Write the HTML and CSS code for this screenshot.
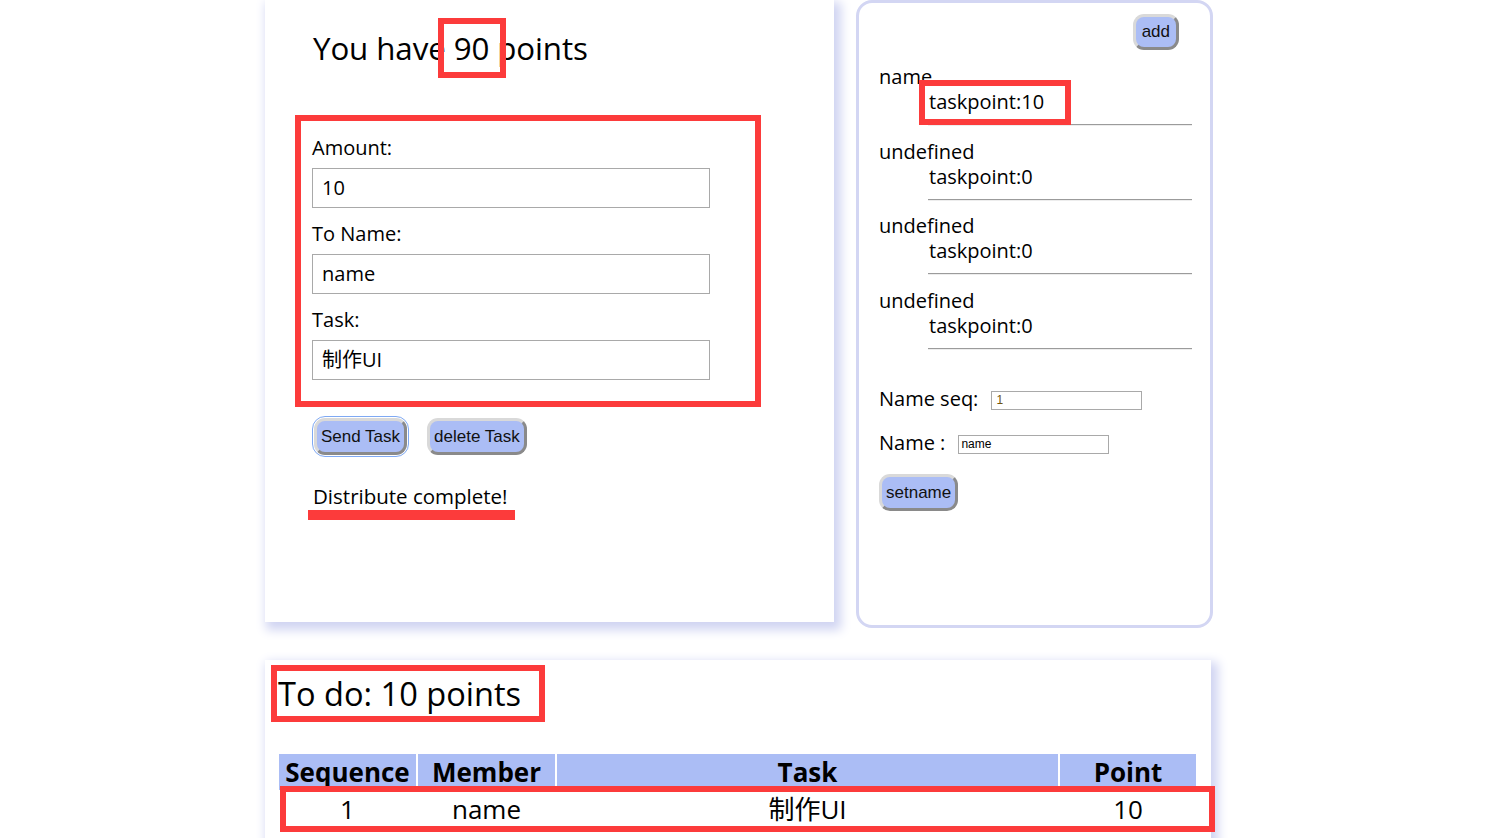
FILE: index.html
```html
<!DOCTYPE html>
<html>
<head>
<meta charset="utf-8">
<link rel="stylesheet" href="styles.css">
</head>
<body>
<div class="page">
  <div class="top-row">
    <div class="card left-card">
      <div class="headline">You have <span class="mark mark-90">90</span> points</div>
      <div class="form-box">
        <div class="label first">Amount:</div>
        <div class="field">10</div>
        <div class="label">To Name:</div>
        <div class="field">name</div>
        <div class="label">Task:</div>
        <div class="field">制作UI</div>
      </div>
      <div class="btn-row">
        <button class="btn focused">Send Task</button>
        <button class="btn">delete Task</button>
      </div>
      <div class="status"><span class="status-text">Distribute complete!</span></div>
    </div>
    <div class="right-card">
      <div class="add-row"><button class="btn btn-add">add</button></div>
      <div class="member">
        <div class="m-name">name</div>
        <div class="m-point"><span class="mark mark-tp">taskpoint:10</span></div>
        <div class="m-rule"></div>
      </div>
      <div class="member">
        <div class="m-name">undefined</div>
        <div class="m-point">taskpoint:0</div>
        <div class="m-rule"></div>
      </div>
      <div class="member">
        <div class="m-name">undefined</div>
        <div class="m-point">taskpoint:0</div>
        <div class="m-rule"></div>
      </div>
      <div class="member">
        <div class="m-name">undefined</div>
        <div class="m-point">taskpoint:0</div>
        <div class="m-rule"></div>
      </div>
      <div class="set-row seq-row"><span>Name seq:</span><span class="small-input seq">1</span></div>
      <div class="set-row name-row"><span>Name :</span><span class="small-input">name</span></div>
      <button class="btn btn-set">setname</button>
    </div>
  </div>
  <div class="card bottom-card">
    <div class="todo"><span class="mark mark-todo">To do: 10 points</span></div>
    <div class="table-wrap">
      <table class="tasks">
        <thead>
          <tr><th class="c-seq">Sequence</th><th class="c-mem">Member</th><th class="c-task">Task</th><th class="c-pt">Point</th></tr>
        </thead>
        <tbody>
          <tr><td>1</td><td>name</td><td>制作UI</td><td>10</td></tr>
        </tbody>
      </table>
      <div class="row-mark"></div>
    </div>
  </div>
</div>
</body>
</html>
```

FILE: styles.css
```css
html, body {
  margin: 0;
  padding: 0;
  background: #ffffff;
}
body {
  font-family: "Open Sans", "Noto Sans CJK SC", sans-serif;
  color: #000;
  width: 1500px;
  height: 838px;
  overflow: hidden;
}
.page {
  padding-left: 265px;
}
.top-row {
  display: flex;
  align-items: flex-start;
  gap: 22px;
}
.card {
  background: #fff;
  box-shadow: 4px 5px 10px 3px #d0d4f2;
}
.left-card {
  width: 569px;
  height: 622px;
  box-sizing: border-box;
  padding-top: 26px;
}
.headline {
  font-size: 31.3px;
  line-height: 44px;
  margin-left: 48px;
  letter-spacing: -0.1px;
}
.mark {
  position: relative;
}
.mark::after {
  content: "";
  position: absolute;
  border: 6px solid #fc3b3b;
}
.mark-90::after {
  left: -16px;
  right: -17px;
  top: -9px;
  bottom: -9px;
}
.form-box {
  margin: 45px 0 0 30px;
  width: 466px;
  height: 292px;
  box-sizing: border-box;
  border: 6px solid #fc3b3b;
  padding: 14px 0 0 11px;
}
.label {
  font-size: 20px;
  line-height: 26px;
  margin-top: 13px;
}
.label.first {
  margin-top: 0;
}
.field {
  margin-top: 7px;
  width: 398px;
  height: 40px;
  box-sizing: border-box;
  border: 1px solid #a9a9a9;
  font-size: 20px;
  line-height: 38px;
  padding-left: 9px;
}
.btn-row {
  display: flex;
  gap: 20px;
  margin: 11px 0 0 49px;
}
.btn {
  font-family: "Liberation Sans", Arial, sans-serif;
  font-size: 17px;
  color: #111;
  background: #abbdf5;
  border: 3px solid;
  border-color: #d9d9d9 #8a8a8a #8a8a8a #d9d9d9;
  border-radius: 11px;
  height: 37px;
  padding: 0 4px;
  margin: 0;
}
.btn.focused {
  outline: 1px solid #7fa9f3;
  outline-offset: 1px;
}
.status {
  margin: 28px 0 0 48px;
  font-size: 20.5px;
  line-height: 26px;
}
.status-text {
  position: relative;
}
.status-text::after {
  content: "";
  position: absolute;
  left: -5px;
  right: -7px;
  bottom: -10px;
  height: 10px;
  background: #fc3b3b;
}
.right-card {
  width: 357px;
  height: 628px;
  box-sizing: border-box;
  border: 3px solid #d3d6f3;
  border-radius: 16px;
  padding: 11px 18px 0 20px;
  font-size: 20px;
}
.add-row {
  display: flex;
  justify-content: flex-end;
  padding-right: 13px;
}
.btn-add {
  height: 36px;
  padding: 0 6px;
}
.member {
  line-height: 25px;
}
.m-name {
  margin-top: 14px;
}
.member + .member .m-name {
  margin-top: 12.7px;
}
.m-point {
  margin-left: 50px;
}
.mark-tp::after {
  left: -10px;
  right: -27px;
  top: -8px;
  bottom: -10px;
}
.m-rule {
  margin: 10px 0 0 49px;
  border-top: 1px solid #9b9b9b;
  border-bottom: 1px solid #ededed;
}
.set-row {
  display: flex;
  align-items: center;
  line-height: 25px;
}
.seq-row {
  margin-top: 36px;
  gap: 13px;
}
.name-row {
  margin-top: 19px;
  gap: 13px;
}
.small-input {
  width: 151px;
  height: 19px;
  box-sizing: border-box;
  border: 1px solid #a9a9a9;
  font-family: "Liberation Sans", Arial, sans-serif;
  font-size: 12px;
  line-height: 17px;
  padding-left: 2px;
  margin-top: 4px;
}
.small-input.seq {
  color: #6f5410;
  padding-left: 4px;
}
.btn-set {
  margin-top: 19px;
  height: 37px;
}
.bottom-card {
  margin-top: 32px;
  width: 946px;
  height: 200px;
  padding-top: 12px;
  box-sizing: border-box;
}
.todo {
  font-size: 32.6px;
  line-height: 44px;
  margin-left: 13px;
}
.mark-todo::after {
  left: -7px;
  right: -24px;
  top: -6px;
  bottom: -6px;
}
.table-wrap {
  position: relative;
  margin: 36px 0 0 12px;
  width: 921px;
}
.tasks {
  width: 921px;
  border-spacing: 2px;
  font-size: 26px;
  table-layout: fixed;
}
.tasks th {
  background: #abbdf5;
  font-weight: 700;
  height: 33px;
  line-height: 36px;
  padding: 0;
  text-align: center;
}
.tasks td {
  height: 34px;
  line-height: 34px;
  padding: 0 0 6px;
  text-align: center;
}
.c-seq { width: 137px; }
.c-mem { width: 137px; }
.c-task { width: 501px; }
.c-pt { width: 136px; }
.row-mark {
  position: absolute;
  left: 3px;
  right: -17px;
  top: 34px;
  height: 46px;
  box-sizing: border-box;
  border: 6px solid #fc3b3b;
}
```
